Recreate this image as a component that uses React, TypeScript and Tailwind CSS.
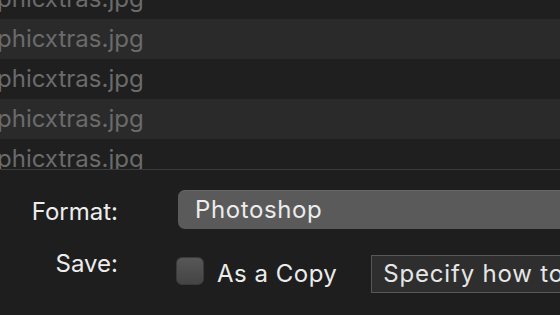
import React from 'react';

/**
 * SaveDialogPanel - bottom of a macOS-style save sheet (dark mode)
 * File list above, Format popup and "Save as a copy" options below.
 */

const files = ['dark', 'light', 'dark', 'light', 'dark'];

const App: React.FC = () => {
  return (
    <div
      className="w-[560px] h-[315px] bg-[#1e1e1e] overflow-hidden flex flex-col"
      style={{ fontFamily: 'Inter, "Liberation Sans", sans-serif' }}
    >
      {/* File list (scrolled) */}
      <div className="h-[169px] shrink-0 overflow-hidden">
        <div className="-mt-[21px] flex flex-col">
          {files.map((tone, i) => (
            <div
              key={i}
              className={`h-[40px] shrink-0 flex items-center ${
                tone === 'light' ? 'bg-[#2a2a2a]' : 'bg-[#1f1f1f]'
              }`}
            >
              <span className="-ml-[3px] text-[24px] leading-[28px] text-[#6b6b6b] whitespace-nowrap">
                phicxtras.jpg
              </span>
            </div>
          ))}
        </div>
      </div>

      <div className="h-px shrink-0 bg-[#3c3c3c]" />

      {/* Options */}
      <div className="flex flex-col pt-[20px]">
        {/* Format row */}
        <div className="flex items-center h-[39px]">
          <div className="w-[118px] shrink-0 text-right pt-[4px] text-[24px] leading-[28px] text-[#ededed]">
            Format:
          </div>
          <div className="ml-[60px] w-[420px] shrink-0 h-[39px] rounded-[7px] bg-[#5a5a5a] border-t border-[#666] flex items-center pl-[17px]">
            <span className="text-[24px] leading-[28px] tracking-[0.6px] text-[#ececec]">Photoshop</span>
          </div>
        </div>

        {/* Save row */}
        <div className="flex items-start mt-[26px]">
          <div className="w-[118px] shrink-0 -mt-[5px] text-right text-[24px] leading-[28px] text-[#ededed]">
            Save:
          </div>
          <div className="ml-[58px] mt-[2px] w-[28px] h-[28px] shrink-0 rounded-[6px] bg-gradient-to-b from-[#575757] to-[#444] border border-[#3a3a3a]" />
          <span className="ml-[13px] pt-[5px] text-[24px] leading-[28px] tracking-[0.5px] text-[#ececec] whitespace-nowrap">
            As a Copy
          </span>
          <div className="ml-[34px] w-[300px] shrink-0 h-[38px] bg-[#2e2e2e] border border-[#575757] flex items-center pl-[11px]">
            <span className="text-[24px] leading-[28px] tracking-[0.8px] text-[#e6e6e6] whitespace-nowrap">
              Specify how to save the file
            </span>
          </div>
        </div>
      </div>
    </div>
  );
};

export default App;
